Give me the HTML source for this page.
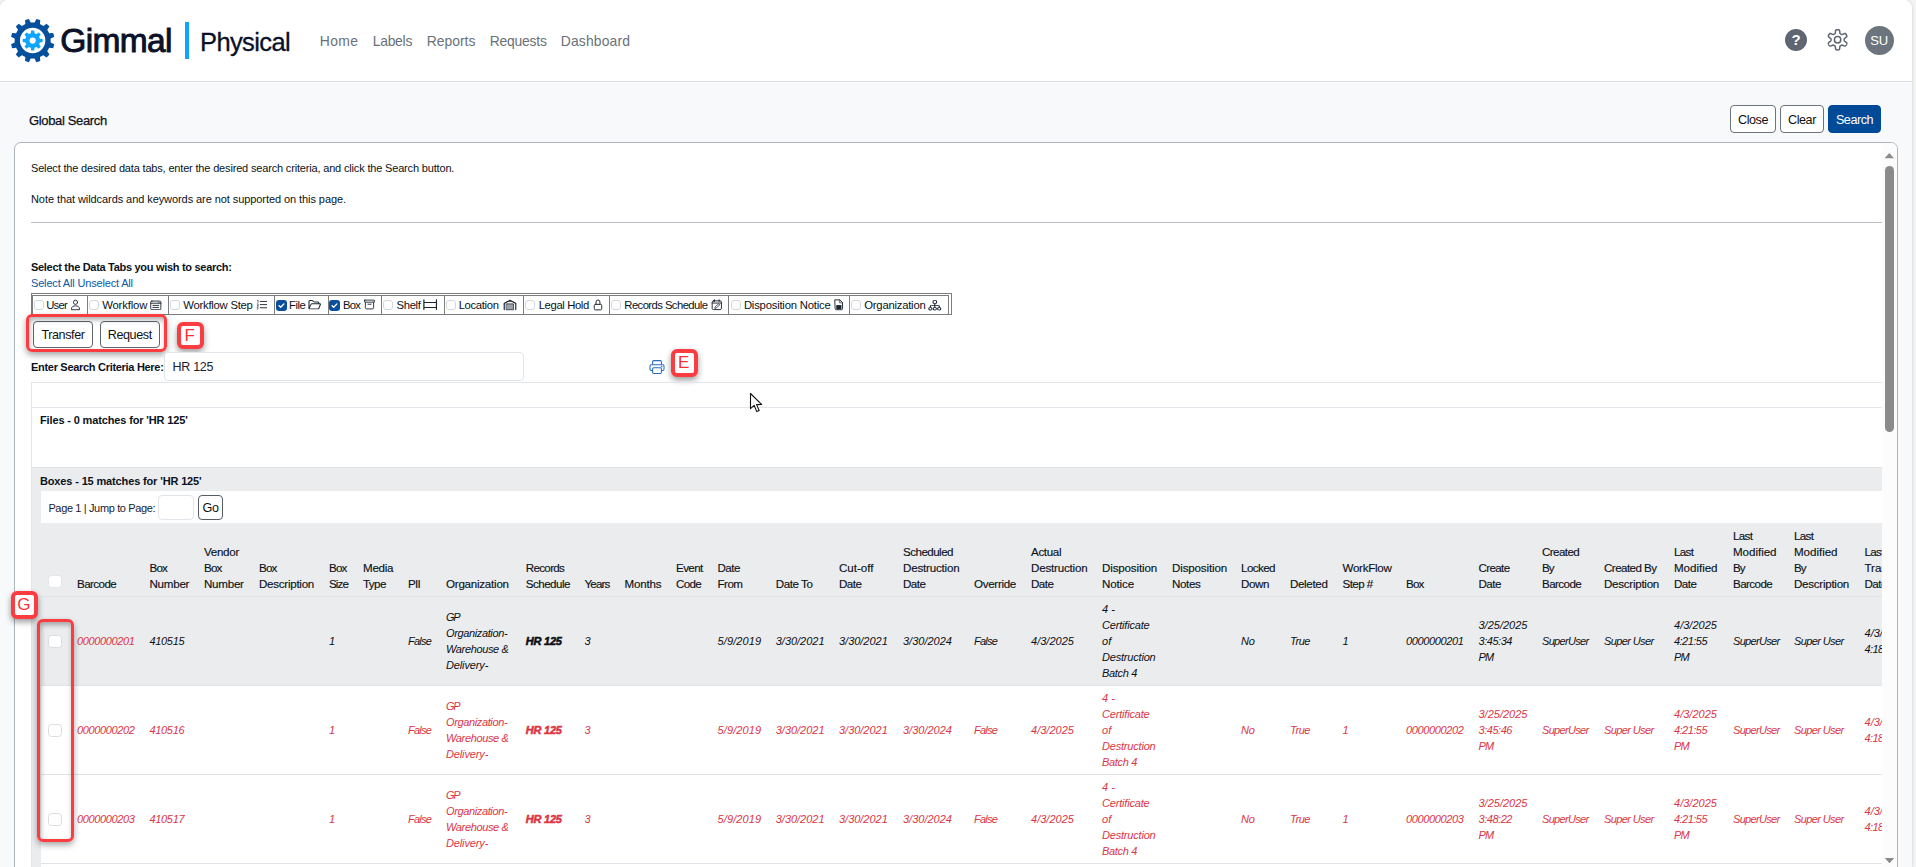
<!DOCTYPE html><html><head><meta charset='utf-8'><title>Global Search</title><style>
html,body{margin:0;padding:0}
body{width:1916px;height:867px;overflow:hidden;background:#f4f4f4;font-family:"Liberation Sans", Arial, sans-serif;font-size:11px;color:#0b1220;position:relative}
.abs,.page *{position:absolute;box-sizing:border-box}
.page{position:absolute;left:0;top:0;width:1912px;height:867px;background:#f8f9fa;border-radius:8px 8px 0 0;overflow:hidden;box-shadow:0 0 3px rgba(0,0,0,.18)}
.hdr{left:0;top:0;width:1912px;height:82px;background:#fff;border-bottom:1px solid #dde1e6}
.t{white-space:nowrap;line-height:16px}
.nav{top:32px;font-size:13.9px;color:#6a7178;line-height:18px;letter-spacing:.1px;white-space:nowrap}
.btn{height:28px;top:105px;border:1px solid #6c757d;border-radius:4px;background:#fff;color:#111;font-size:12.6px;text-align:center;line-height:26px;padding-top:1px;letter-spacing:-.45px;white-space:nowrap}
.panel{left:14px;top:142px;width:1884px;height:740px;background:#fff;border:1px solid #adb4bc;border-radius:7px}
.b{font-weight:bold}
.cb{width:10px;height:10px;border:1px solid #d3d8de;border-radius:3px;background:#fff}
.cbk{width:11px;height:11px;border-radius:3px;background:#0a4f9c}
.tab{top:295px;height:20px;border:1px solid #7d7d7d}
.tt{top:297px;font-size:11.3px;line-height:16px;white-space:nowrap;color:#0b1220;letter-spacing:-.2px}
.red{border:3.5px solid #fb3c40;border-radius:6px;box-shadow:0 3px 6px rgba(0,0,0,.35), inset 1px 3px 5px rgba(0,0,0,.3)}
.badge{width:27px;height:27.6px;border:4px solid #fb3c40;border-radius:6px;background:#fff;color:#fb3036;font-size:17px;line-height:19px;text-align:center;text-indent:-1.5px;box-shadow:0 3px 6px rgba(0,0,0,.4)}
.sbtn{top:320.5px;height:27.5px;width:60px;border:1px solid #5f666d;border-radius:4px;background:#fff;font-size:12.6px;line-height:25px;padding-top:1px;text-align:center;letter-spacing:-.4px;color:#111}
.th{font-size:11.6px;line-height:16px;color:#0b1220;white-space:nowrap;letter-spacing:-.25px;-webkit-text-stroke:.15px #0b1220}
.page span{position:static}
.td{font-size:11px;line-height:16px;font-style:italic;white-space:nowrap;letter-spacing:-.3px}
.td b{position:static;-webkit-text-stroke:.55px}
.r{color:#dc3545}
.k{color:#0b0f14}
.rcb{width:13.6px;height:13.4px;margin-left:-.6px;border:1px solid #d9dde2;border-radius:3.5px;background:#fff}
</style></head><body><div class='page'>
<div class='hdr'></div>
<svg style='left:0;top:0' width='70' height='82' viewBox='0 0 70 82'><path fill='#04509c' fill-rule='evenodd' d='M50.64,42.50 L54.24,44.24 L53.19,48.15 L49.21,47.85 L47.26,51.24 L49.50,54.54 L46.64,57.40 L43.34,55.16 L39.95,57.11 L40.25,61.09 L36.34,62.14 L34.60,58.54 L30.70,58.54 L28.96,62.14 L25.05,61.09 L25.35,57.11 L21.96,55.16 L18.66,57.40 L15.80,54.54 L18.04,51.24 L16.09,47.85 L12.11,48.15 L11.06,44.24 L14.66,42.50 L14.66,38.60 L11.06,36.86 L12.11,32.95 L16.09,33.25 L18.04,29.86 L15.80,26.56 L18.66,23.70 L21.96,25.94 L25.35,23.99 L25.05,20.01 L28.96,18.96 L30.70,22.56 L34.60,22.56 L36.34,18.96 L40.25,20.01 L39.95,23.99 L43.34,25.94 L46.64,23.70 L49.50,26.56 L47.26,29.86 L49.21,33.25 L53.19,32.95 L54.24,36.86 L50.64,38.60Z M19.95,40.55 a12.7,12.7 0 1,0 25.4,0 a12.7,12.7 0 1,0 -25.4,0Z'/><path fill='#10a6ff' fill-rule='evenodd' d='M39.91,38.67 L42.64,39.06 L42.64,42.04 L39.91,42.43 L39.11,44.36 L40.77,46.56 L38.66,48.67 L36.46,47.01 L34.53,47.81 L34.14,50.54 L31.16,50.54 L30.77,47.81 L28.84,47.01 L26.64,48.67 L24.53,46.56 L26.19,44.36 L25.39,42.43 L22.66,42.04 L22.66,39.06 L25.39,38.67 L26.19,36.74 L24.53,34.54 L26.64,32.43 L28.84,34.09 L30.77,33.29 L31.16,30.56 L34.14,30.56 L34.53,33.29 L36.46,34.09 L38.66,32.43 L40.77,34.54 L39.11,36.74Z M29.55,40.55 a3.1,3.1 0 1,0 6.2,0 a3.1,3.1 0 1,0 -6.2,0Z'/></svg>
<div class='t' style='left:60.3px;top:21.3px;font-size:33.5px;line-height:40px;color:#0a1128;letter-spacing:-.65px;-webkit-text-stroke:.95px #0a1128'>Gimmal</div>
<div style='left:185px;top:22px;width:4px;height:37px;background:#0ea5ff'></div>
<div class='t' style='left:200px;top:24px;font-size:25.5px;line-height:36px;color:#0a1128;letter-spacing:-.62px;-webkit-text-stroke:.3px #0a1128'>Physical</div>
<div class='nav' style='left:319.7px;letter-spacing:0.409px'>Home</div>
<div class='nav' style='left:372.7px;letter-spacing:-0.248px'>Labels</div>
<div class='nav' style='left:426.7px;letter-spacing:0.008px'>Reports</div>
<div class='nav' style='left:489.7px;letter-spacing:-0.217px'>Requests</div>
<div class='nav' style='left:560.7px;letter-spacing:0.165px'>Dashboard</div>
<div style='left:1785px;top:29px;width:22px;height:22px;border-radius:50%;background:#5f6672;color:#fff;font-weight:bold;font-size:15px;line-height:22px;text-align:center'>?</div>
<svg style='left:1825px;top:27px' width='26' height='26' viewBox='0 0 26 26'><path d='M19.20,12.80 L19.20,13.03 L19.20,13.26 L19.22,13.50 L19.27,13.74 L19.41,14.00 L19.73,14.32 L20.31,14.72 L21.02,15.21 L21.55,15.71 L21.80,16.15 L21.84,16.53 L21.78,16.89 L21.66,17.22 L21.51,17.54 L21.35,17.85 L21.16,18.15 L20.96,18.44 L20.73,18.70 L20.45,18.93 L20.10,19.09 L19.59,19.10 L18.90,18.88 L18.12,18.51 L17.48,18.22 L17.04,18.10 L16.75,18.11 L16.51,18.18 L16.30,18.29 L16.10,18.40 L15.90,18.52 L15.70,18.63 L15.50,18.75 L15.31,18.88 L15.12,19.05 L14.96,19.30 L14.85,19.73 L14.79,20.44 L14.72,21.30 L14.56,22.01 L14.30,22.44 L13.99,22.67 L13.65,22.79 L13.30,22.86 L12.95,22.89 L12.60,22.90 L12.25,22.89 L11.90,22.86 L11.55,22.79 L11.21,22.67 L10.90,22.44 L10.64,22.01 L10.48,21.30 L10.41,20.44 L10.35,19.73 L10.24,19.30 L10.08,19.05 L9.89,18.88 L9.70,18.75 L9.50,18.63 L9.30,18.52 L9.10,18.40 L8.90,18.29 L8.69,18.18 L8.45,18.11 L8.16,18.10 L7.72,18.22 L7.08,18.51 L6.30,18.88 L5.61,19.10 L5.10,19.09 L4.75,18.93 L4.47,18.70 L4.24,18.44 L4.04,18.15 L3.85,17.85 L3.69,17.54 L3.54,17.22 L3.42,16.89 L3.36,16.53 L3.40,16.15 L3.65,15.71 L4.18,15.21 L4.89,14.72 L5.47,14.32 L5.79,14.00 L5.93,13.74 L5.98,13.50 L6.00,13.26 L6.00,13.03 L6.00,12.80 L6.00,12.57 L6.00,12.34 L5.98,12.10 L5.93,11.86 L5.79,11.60 L5.47,11.28 L4.89,10.88 L4.18,10.39 L3.65,9.89 L3.40,9.45 L3.36,9.07 L3.42,8.71 L3.54,8.38 L3.69,8.06 L3.85,7.75 L4.04,7.45 L4.24,7.16 L4.47,6.90 L4.75,6.67 L5.10,6.51 L5.61,6.50 L6.30,6.72 L7.08,7.09 L7.72,7.38 L8.16,7.50 L8.45,7.49 L8.69,7.42 L8.90,7.31 L9.10,7.20 L9.30,7.08 L9.50,6.97 L9.70,6.85 L9.89,6.72 L10.08,6.55 L10.24,6.30 L10.35,5.87 L10.41,5.16 L10.48,4.30 L10.64,3.59 L10.90,3.16 L11.21,2.93 L11.55,2.81 L11.90,2.74 L12.25,2.71 L12.60,2.70 L12.95,2.71 L13.30,2.74 L13.65,2.81 L13.99,2.93 L14.30,3.16 L14.56,3.59 L14.72,4.30 L14.79,5.16 L14.85,5.87 L14.96,6.30 L15.12,6.55 L15.31,6.72 L15.50,6.85 L15.70,6.97 L15.90,7.08 L16.10,7.20 L16.30,7.31 L16.51,7.42 L16.75,7.49 L17.04,7.50 L17.48,7.38 L18.12,7.09 L18.90,6.72 L19.59,6.50 L20.10,6.51 L20.45,6.67 L20.73,6.90 L20.96,7.16 L21.16,7.45 L21.35,7.75 L21.51,8.06 L21.66,8.38 L21.78,8.71 L21.84,9.07 L21.80,9.45 L21.55,9.89 L21.02,10.39 L20.31,10.88 L19.73,11.28 L19.41,11.60 L19.27,11.86 L19.22,12.10 L19.20,12.34 L19.20,12.57Z' fill='none' stroke='#5f6672' stroke-width='1.5' stroke-linejoin='round'/><circle cx='12.6' cy='12.8' r='3.2' fill='none' stroke='#5f6672' stroke-width='1.5'/></svg>
<div style='left:1864.5px;top:26px;width:29px;height:29px;border-radius:50%;background:#6c757d;color:#fff;font-size:13px;line-height:29px;text-align:center;letter-spacing:-.3px'>SU</div>
<div class='t' style='left:29px;top:111.8px;font-size:13px;line-height:18px;color:#0b1220;letter-spacing:-.35px;-webkit-text-stroke:.25px #0b1220'>Global Search</div>
<div class='btn' style='left:1730px;width:46px'>Close</div>
<div class='btn' style='left:1780px;width:44px'>Clear</div>
<div class='btn' style='left:1828px;width:53px;background:#004a98;border-color:#004a98;color:#fff'>Search</div>
<div class='panel'></div>
<div style='left:1882px;top:143px;width:15px;height:724px;background:#fcfcfc;border-radius:0 6px 0 0'></div>
<svg style='left:1882px;top:150px' width='15' height='12' viewBox='0 0 15 12'><path d='M2.6,8.2 L7.3,3 L12,8.2Z' fill='#8a8a8a'/></svg>
<div style='left:1885px;top:165.5px;width:9px;height:266.5px;border-radius:4.5px;background:#8b8b8b'></div>
<svg style='left:1882px;top:855px' width='15' height='12' viewBox='0 0 15 12'><path d='M2.8,3 L12.2,3 L7.5,8.2Z' fill='#8a8a8a'/></svg>
<div class='t' style='left:31px;top:160px;letter-spacing:-.17px'>Select the desired data tabs, enter the desired search criteria, and click the Search button.</div>
<div class='t' style='left:31px;top:191px;letter-spacing:-.075px'>Note that wildcards and keywords are not supported on this page.</div>
<div style='left:31px;top:222px;width:1851px;height:1px;background:#b9bec4'></div>
<div class='t b' style='left:31px;top:259px;letter-spacing:-.3px'>Select the Data Tabs you wish to search:</div>
<div class='t' style='left:31px;top:275px;color:#0a58a6;letter-spacing:-.17px'>Select All Unselect All</div>
<div style='left:31px;top:293px;width:921px;height:22px;border:1px solid #7d7d7d'></div>
<div class='tab' style='left:32.0px;width:55.8px'></div>
<div class='tab' style='left:86.8px;width:82.2px'></div>
<div class='tab' style='left:168.0px;width:107.0px'></div>
<div class='tab' style='left:274.0px;width:54.8px'></div>
<div class='tab' style='left:327.8px;width:54.2px'></div>
<div class='tab' style='left:381.0px;width:63.8px'></div>
<div class='tab' style='left:443.8px;width:80.2px'></div>
<div class='tab' style='left:523.0px;width:86.8px'></div>
<div class='tab' style='left:608.8px;width:120.0px'></div>
<div class='tab' style='left:727.8px;width:121.9px'></div>
<div class='tab' style='left:848.7px;width:100.1px'></div>
<div class='cb' style='left:33.5px;top:300.3px'></div>
<div class='tt' style='left:46.20px;letter-spacing:-0.727px'>User</div>
<svg style='left:70.3px;top:299.2px' width='11' height='11.4' viewBox='0 0 16 16' preserveAspectRatio='none' fill='none' stroke='#1b2330' stroke-width='1.3' stroke-linecap='round' stroke-linejoin='round'><circle cx='8' cy='4.6' r='3'/><path d='M2,14.5 C2,10.5 5,9.6 8,9.6 S14,10.5 14,14.5Z'/></svg>
<div class='cb' style='left:89.4px;top:300.3px'></div>
<div class='tt' style='left:102.20px;letter-spacing:-0.162px'>Workflow</div>
<svg style='left:150.4px;top:299.6px' width='11.6' height='10.8' viewBox='0 0 16 16' preserveAspectRatio='none' fill='none' stroke='#1b2330' stroke-width='1.3' stroke-linecap='round' stroke-linejoin='round'><rect x='1' y='1.6' width='14' height='12.8' rx='1.6'/><path d='M1,4.8 H15 M4,8 H12 M4,11 H12' /><path d='M12,3.2 h.6' stroke-width='1.4'/></svg>
<div class='cb' style='left:170px;top:300.3px'></div>
<div class='tt' style='left:183.30px;letter-spacing:-0.252px'>Workflow Step</div>
<svg style='left:255.8px;top:299.4px' width='11.4' height='11.2' viewBox='0 0 16 16' preserveAspectRatio='none' fill='none' stroke='#1b2330' stroke-width='1.3' stroke-linecap='round' stroke-linejoin='round'><path d='M6,3.5 H15 M6,8 H15 M6,12.5 H15'/><path d='M2,2 L2.9,1.6 V5 M1.6,7 Q3.6,6.4 3.2,8 L1.6,10 H3.6 M1.6,11.6 Q3.8,11.4 2.6,13 Q4,14.6 1.6,14.6' stroke-width='.9'/></svg>
<div class='cbk' style='left:276px;top:299.8px'></div>
<svg style='left:276px;top:299.8px' width='11' height='11' viewBox='0 0 11 11'><path d='M3.1,5.7 L4.7,7.3 L7.9,3.9' fill='none' stroke='#fff' stroke-width='1.35' stroke-linecap='round' stroke-linejoin='round'/></svg>
<div class='tt' style='left:289.05px;letter-spacing:-0.488px'>File</div>
<svg style='left:308.2px;top:299.4px' width='13' height='11.4' viewBox='0 0 16 16' preserveAspectRatio='none' fill='none' stroke='#1b2330' stroke-width='1.3' stroke-linecap='round' stroke-linejoin='round'><path d='M1.2,12.6 V3.4 Q1.2,2.2 2.4,2.2 H5 Q5.8,2.2 6.6,3.2 Q7.4,4.2 8.4,4.2 H12 Q13.2,4.2 13.2,5.4 V6.6'/><path d='M1.3,13 L3.6,7.6 Q4,6.6 5,6.6 H14.4 Q15.6,6.6 15.2,7.7 L13.5,12.9 Q13.2,13.9 12.2,13.9 H2.4 Q1.2,13.9 1.2,12.6'/></svg>
<div class='cbk' style='left:329px;top:299.8px'></div>
<svg style='left:329px;top:299.8px' width='11' height='11' viewBox='0 0 11 11'><path d='M3.1,5.7 L4.7,7.3 L7.9,3.9' fill='none' stroke='#fff' stroke-width='1.35' stroke-linecap='round' stroke-linejoin='round'/></svg>
<div class='tt' style='left:343.05px;letter-spacing:-0.790px'>Box</div>
<svg style='left:363.6px;top:299.4px' width='11' height='11' viewBox='0 0 16 16' preserveAspectRatio='none' fill='none' stroke='#1b2330' stroke-width='1.3' stroke-linecap='round' stroke-linejoin='round'><rect x='.8' y='1.6' width='14.4' height='3' rx='.5'/><path d='M2,4.8 V12.6 Q2,14.4 3.8,14.4 H12.2 Q14,14.4 14,12.6 V4.8 M5.6,7.6 H10.4'/></svg>
<div class='cb' style='left:383.2px;top:300.3px'></div>
<div class='tt' style='left:396.55px;letter-spacing:-0.360px'>Shelf</div>
<svg style='left:422.6px;top:299.2px' width='14.4' height='11.2' viewBox='0 0 16 16' preserveAspectRatio='none' fill='none' stroke='#1b2330' stroke-width='1.3' stroke-linecap='round' stroke-linejoin='round'><path d='M1,1 V15 M15,1 V15 M1,5 H15 M1,12 H15' stroke-width='1.4'/></svg>
<div class='cb' style='left:446px;top:300.3px'></div>
<div class='tt' style='left:458.70px;letter-spacing:-0.346px'>Location</div>
<svg style='left:503px;top:298.8px' width='14' height='11.8' viewBox='0 0 16 16' preserveAspectRatio='none' fill='none' stroke='#1b2330' stroke-width='1.3' stroke-linecap='round' stroke-linejoin='round'><path d='M1.4,14.5 V6 L8,1.6 L14.6,6 V14.5'/><path d='M1.4,6 Q8,0 14.6,6' stroke-width='1'/><rect x='4' y='6.6' width='8' height='8' fill='#9aa1ab' stroke='#1b2330' stroke-width='.9'/></svg>
<div class='cb' style='left:525.4px;top:300.3px'></div>
<div class='tt' style='left:538.70px;letter-spacing:-0.382px'>Legal Hold</div>
<svg style='left:591.6px;top:299px' width='12' height='11.6' viewBox='0 0 16 16' preserveAspectRatio='none' fill='none' stroke='#1b2330' stroke-width='1.3' stroke-linecap='round' stroke-linejoin='round'><rect x='3' y='7.4' width='10' height='7.6' rx='1.6'/><path d='M5.4,7.4 V4.2 Q5.4,1.4 8,1.4 T10.6,4.2 V7.4'/></svg>
<div class='cb' style='left:611.3px;top:300.3px'></div>
<div class='tt' style='left:624.30px;letter-spacing:-0.576px'>Records Schedule</div>
<svg style='left:710.6px;top:299px' width='11.6' height='11.6' viewBox='0 0 16 16' preserveAspectRatio='none' fill='none' stroke='#1b2330' stroke-width='1.3' stroke-linecap='round' stroke-linejoin='round'><rect x='1.6' y='2.6' width='12.8' height='12' rx='1.8'/><path d='M1.6,5.6 H14.4 M4.8,1 V3.4 M11.2,1 V3.4'/><path d='M5.4,12.6 L6,10.4 L10.8,6.6 L12.2,8 L7.4,12.2Z' stroke-width='1'/></svg>
<div class='cb' style='left:730.7px;top:300.3px'></div>
<div class='tt' style='left:743.90px;letter-spacing:-0.212px'>Disposition Notice</div>
<svg style='left:832.6px;top:299px' width='11.4' height='11.6' viewBox='0 0 16 16' preserveAspectRatio='none' fill='none' stroke='#1b2330' stroke-width='1.3' stroke-linecap='round' stroke-linejoin='round'><path d='M3,1.2 H9.6 L13.4,5 V13.4 Q13.4,14.8 12,14.8 H4.4 Q3,14.8 3,13.4Z'/><path d='M9.4,1.4 V5.2 H13.2' stroke-width='1'/><rect x='4.6' y='8.4' width='7.2' height='5.6' fill='#1b2330' stroke='none'/></svg>
<div class='cb' style='left:851.3px;top:300.3px'></div>
<div class='tt' style='left:864.30px;letter-spacing:-0.239px'>Organization</div>
<svg style='left:928.2px;top:299.6px' width='13.6' height='11' viewBox='0 0 16 16' preserveAspectRatio='none' fill='none' stroke='#1b2330' stroke-width='1.3' stroke-linecap='round' stroke-linejoin='round'><rect x='6' y='.9' width='4' height='4' rx='.8'/><path d='M8,5 V8.2 M2.8,10.4 V8.2 H13.2 V10.4 M8,8.2 V10.4'/><circle cx='2.8' cy='12.6' r='1.9'/><circle cx='8' cy='12.6' r='1.9'/><circle cx='13.2' cy='12.6' r='1.9'/></svg>
<div class='sbtn' style='left:33px'>Transfer</div>
<div class='sbtn' style='left:99.5px;width:60.5px'>Request</div>
<div class='red' style='left:25.9px;top:313.8px;width:141.1px;height:38.2px'></div>
<div class='badge' style='left:177px;top:321.8px'>F</div>
<div class='t b' style='left:31px;top:358.5px;letter-spacing:-.3px'>Enter Search Criteria Here:</div>
<div style='left:164px;top:352px;width:360px;height:29px;border:1px solid #e1e5ea;border-radius:4px;background:#fff'></div>
<div class='t' style='left:172.5px;top:358.8px;font-size:12.5px;letter-spacing:-.3px;color:#1a2230'>HR 125</div>
<svg style='left:648.5px;top:359px' width='16' height='16' viewBox='0 0 16 16' fill='none' stroke='#2a6ac4' stroke-width='1.05' stroke-linejoin='round'><path d='M3.6,5.6 V2.8 Q3.6,1.6 4.8,1.6 H11.2 Q12.4,1.6 12.4,2.8 V5.6'/><path d='M3.4,11.4 H2.2 Q1,11.4 1,10.2 V7 Q1,5.8 2.2,5.8 H13.8 Q15,5.8 15,7 V10.2 Q15,11.4 13.8,11.4 H12.6'/><rect x='3.6' y='8.8' width='8.8' height='5.6' rx='1.1'/><circle cx='12.6' cy='7.6' r='.3'/></svg>
<div class='badge' style='left:671px;top:349.4px'>E</div>
<div style='left:31px;top:382px;width:1851px;height:500px;border-left:1px solid #e4e5e7;border-top:1px solid #e2e5e9'></div>
<div style='left:31px;top:407px;width:1851px;height:1px;background:#e2e5e9'></div>
<div class='t b' style='left:40px;top:412px;letter-spacing:-.14px'>Files - 0 matches for 'HR 125'</div>
<div style='left:31px;top:467px;width:1851px;height:400px;background:#ebecee;border-top:1px solid #e1e2e3;border-left:1px solid #e4e5e7'></div>
<div class='t b' style='left:40px;top:473px;letter-spacing:-.145px'>Boxes - 15 matches for 'HR 125'</div>
<div style='left:41px;top:491px;width:1841px;height:32px;background:#fff'></div>
<div class='t' style='left:48.4px;top:500px;letter-spacing:-.36px;color:#1a2230'>Page 1 | Jump to Page:</div>
<div style='left:158px;top:495px;width:36px;height:25px;border:1px solid #e1e5ea;border-radius:4px;background:#fff'></div>
<div style='left:198px;top:495px;width:25px;height:25px;border:1px solid #555c63;border-radius:4px;background:#fff;font-size:12.6px;line-height:23px;padding-top:1.3px;text-align:center;letter-spacing:-.4px;color:#111'>Go</div>
<div style='left:41px;top:523px;width:1841px;height:344px;overflow:hidden'>
<div style='left:0;top:0;width:1841px;height:73px;background:#ebecee'></div>
<div style='left:0;top:73px;width:1841px;height:1px;background:#dfe2e6'></div>
<div style='left:0;top:74px;width:1841px;height:88px;background:#ebecee'></div>
<div style='left:0;top:162px;width:1841px;height:1px;background:#dfe2e6'></div>
<div style='left:0;top:163px;width:1841px;height:88px;background:#fff'></div>
<div style='left:0;top:251px;width:1841px;height:1px;background:#dfe2e6'></div>
<div style='left:0;top:252px;width:1841px;height:88px;background:#fff'></div>
<div style='left:0;top:340px;width:1841px;height:1px;background:#dfe2e6'></div>
<div style='left:0;top:341px;width:1841px;height:10px;background:#fff'></div>
<div class='rcb' style='left:7.5px;top:52px;border-color:#e3e6ea'></div>
<div class='th' style='left:36px;top:53px'><span style='letter-spacing:-0.562px'>Barcode</span></div>
<div class='th' style='left:108.5px;top:37px'><span style='letter-spacing:-0.828px'>Box</span><br><span style='letter-spacing:-0.250px'>Number</span></div>
<div class='th' style='left:163px;top:21px'><span style='letter-spacing:-0.292px'>Vendor</span><br><span style='letter-spacing:-0.828px'>Box</span><br><span style='letter-spacing:-0.250px'>Number</span></div>
<div class='th' style='left:218px;top:37px'><span style='letter-spacing:-0.828px'>Box</span><br><span style='letter-spacing:-0.273px'>Description</span></div>
<div class='th' style='left:288px;top:37px'><span style='letter-spacing:-0.828px'>Box</span><br><span style='letter-spacing:-0.891px'>Size</span></div>
<div class='th' style='left:322px;top:37px'><span style='letter-spacing:-0.266px'>Media</span><br><span style='letter-spacing:-0.598px'>Type</span></div>
<div class='th' style='left:367px;top:53px'><span style='letter-spacing:-0.729px'>PII</span></div>
<div class='th' style='left:405px;top:53px'><span style='letter-spacing:-0.246px'>Organization</span></div>
<div class='th' style='left:484.75px;top:37px'><span style='letter-spacing:-0.667px'>Records</span><br><span style='letter-spacing:-0.514px'>Schedule</span></div>
<div class='th' style='left:543.5px;top:53px'><span style='letter-spacing:-0.847px'>Years</span></div>
<div class='th' style='left:583.5px;top:53px'><span style='letter-spacing:-0.172px'>Months</span></div>
<div class='th' style='left:635px;top:37px'><span style='letter-spacing:-0.581px'>Event</span><br><span style='letter-spacing:-0.680px'>Code</span></div>
<div class='th' style='left:676.5px;top:37px'><span style='letter-spacing:-0.500px'>Date</span><br><span style='letter-spacing:-0.516px'>From</span></div>
<div class='th' style='left:734.75px;top:53px'><span style='letter-spacing:-0.429px'>Date To</span></div>
<div class='th' style='left:798px;top:37px'><span style='letter-spacing:-0.013px'>Cut-off</span><br><span style='letter-spacing:-0.500px'>Date</span></div>
<div class='th' style='left:862px;top:21px'><span style='letter-spacing:-0.533px'>Scheduled</span><br><span style='letter-spacing:-0.195px'>Destruction</span><br><span style='letter-spacing:-0.500px'>Date</span></div>
<div class='th' style='left:933px;top:53px'><span style='letter-spacing:-0.309px'>Override</span></div>
<div class='th' style='left:990px;top:21px'><span style='letter-spacing:-0.331px'>Actual</span><br><span style='letter-spacing:-0.195px'>Destruction</span><br><span style='letter-spacing:-0.500px'>Date</span></div>
<div class='th' style='left:1061px;top:37px'><span style='letter-spacing:-0.156px'>Disposition</span><br><span style='letter-spacing:-0.146px'>Notice</span></div>
<div class='th' style='left:1131px;top:37px'><span style='letter-spacing:-0.156px'>Disposition</span><br><span style='letter-spacing:-0.359px'>Notes</span></div>
<div class='th' style='left:1200px;top:37px'><span style='letter-spacing:-0.565px'>Locked</span><br><span style='letter-spacing:-0.414px'>Down</span></div>
<div class='th' style='left:1249px;top:53px'><span style='letter-spacing:-0.353px'>Deleted</span></div>
<div class='th' style='left:1301.5px;top:37px'><span style='letter-spacing:-0.291px'>WorkFlow</span><br><span style='letter-spacing:-0.589px'>Step #</span></div>
<div class='th' style='left:1365px;top:53px'><span style='letter-spacing:-0.828px'>Box</span></div>
<div class='th' style='left:1437.5px;top:37px'><span style='letter-spacing:-0.635px'>Create</span><br><span style='letter-spacing:-0.500px'>Date</span></div>
<div class='th' style='left:1501px;top:21px'><span style='letter-spacing:-0.571px'>Created</span><br><span style='letter-spacing:-1.016px'>By</span><br><span style='letter-spacing:-0.562px'>Barcode</span></div>
<div class='th' style='left:1563px;top:37px'><span style='letter-spacing:-0.550px'>Created By</span><br><span style='letter-spacing:-0.273px'>Description</span></div>
<div class='th' style='left:1633px;top:21px'><span style='letter-spacing:-0.668px'>Last</span><br><span style='letter-spacing:-0.041px'>Modified</span><br><span style='letter-spacing:-0.500px'>Date</span></div>
<div class='th' style='left:1692px;top:5px'><span style='letter-spacing:-0.668px'>Last</span><br><span style='letter-spacing:-0.041px'>Modified</span><br><span style='letter-spacing:-1.016px'>By</span><br><span style='letter-spacing:-0.562px'>Barcode</span></div>
<div class='th' style='left:1753px;top:5px'><span style='letter-spacing:-0.668px'>Last</span><br><span style='letter-spacing:-0.041px'>Modified</span><br><span style='letter-spacing:-1.016px'>By</span><br><span style='letter-spacing:-0.273px'>Description</span></div>
<div class='th' style='left:1823.5px;top:21px'><span style='letter-spacing:-0.668px'>Last</span><br><span style='letter-spacing:-0.031px'>Transfer</span><br><span style='letter-spacing:-0.500px'>Date</span></div>
<div class='rcb' style='left:7.5px;top:112px'></div>
<div class='td r' style='left:36px;top:110.0px'><span style='letter-spacing:-0.369px'>0000000201</span></div>
<div class='td k' style='left:108.5px;top:110.0px'><span style='letter-spacing:-0.328px'>410515</span></div>
<div class='td k' style='left:288px;top:110.0px'>1</div>
<div class='td k' style='left:367px;top:110.0px'><span style='letter-spacing:-0.731px'>False</span></div>
<div class='td k' style='left:405px;top:86.0px'><span style='letter-spacing:-1.203px'>GP</span><br><span style='letter-spacing:-0.369px'>Organization-</span><br><span style='letter-spacing:-0.359px'>Warehouse &amp;</span><br><span style='letter-spacing:-0.128px'>Delivery-</span></div>
<div class='td k' style='left:484.75px;top:110.0px'><span style='letter-spacing:-0.216px'><b>HR 125</b></span></div>
<div class='td k' style='left:543.5px;top:110.0px'>3</div>
<div class='td k' style='left:676.5px;top:110.0px'><span style='letter-spacing:0.115px'>5/9/2019</span></div>
<div class='td k' style='left:734.75px;top:110.0px'><span style='letter-spacing:-0.021px'>3/30/2021</span></div>
<div class='td k' style='left:798px;top:110.0px'><span style='letter-spacing:-0.021px'>3/30/2021</span></div>
<div class='td k' style='left:862px;top:110.0px'><span style='letter-spacing:0.007px'>3/30/2024</span></div>
<div class='td k' style='left:933px;top:110.0px'><span style='letter-spacing:-0.731px'>False</span></div>
<div class='td k' style='left:990px;top:110.0px'><span style='letter-spacing:0.009px'>4/3/2025</span></div>
<div class='td k' style='left:1061px;top:78.0px'><span style='letter-spacing:0.052px'>4 -</span><br><span style='letter-spacing:-0.185px'>Certificate</span><br><span style='letter-spacing:0.031px'>of</span><br><span style='letter-spacing:-0.195px'>Destruction</span><br><span style='letter-spacing:-0.330px'>Batch 4</span></div>
<div class='td k' style='left:1200px;top:110.0px'><span style='letter-spacing:-0.156px'>No</span></div>
<div class='td k' style='left:1249px;top:110.0px'><span style='letter-spacing:-0.453px'>True</span></div>
<div class='td k' style='left:1301.5px;top:110.0px'>1</div>
<div class='td k' style='left:1365px;top:110.0px'><span style='letter-spacing:-0.369px'>0000000201</span></div>
<div class='td k' style='left:1437.5px;top:94.0px'><span style='letter-spacing:0.007px'>3/25/2025</span><br><span style='letter-spacing:-0.458px'>3:45:34</span><br><span style='letter-spacing:-0.750px'>PM</span></div>
<div class='td k' style='left:1501px;top:110.0px'><span style='letter-spacing:-0.675px'>SuperUser</span></div>
<div class='td k' style='left:1563px;top:110.0px'><span style='letter-spacing:-0.614px'>Super User</span></div>
<div class='td k' style='left:1633px;top:94.0px'><span style='letter-spacing:0.009px'>4/3/2025</span><br><span style='letter-spacing:-0.529px'>4:21:55</span><br><span style='letter-spacing:-0.750px'>PM</span></div>
<div class='td k' style='left:1692px;top:110.0px'><span style='letter-spacing:-0.675px'>SuperUser</span></div>
<div class='td k' style='left:1753px;top:110.0px'><span style='letter-spacing:-0.614px'>Super User</span></div>
<div class='td k' style='left:1823.5px;top:102.0px'><span style='letter-spacing:0.009px'>4/3/2025</span><br><span style='letter-spacing:-0.627px'>4:18:32 PM</span></div>
<div class='rcb' style='left:7.5px;top:201px'></div>
<div class='td r' style='left:36px;top:199.0px'><span style='letter-spacing:-0.369px'>0000000202</span></div>
<div class='td r' style='left:108.5px;top:199.0px'><span style='letter-spacing:-0.328px'>410516</span></div>
<div class='td r' style='left:288px;top:199.0px'>1</div>
<div class='td r' style='left:367px;top:199.0px'><span style='letter-spacing:-0.731px'>False</span></div>
<div class='td r' style='left:405px;top:175.0px'><span style='letter-spacing:-1.203px'>GP</span><br><span style='letter-spacing:-0.369px'>Organization-</span><br><span style='letter-spacing:-0.359px'>Warehouse &amp;</span><br><span style='letter-spacing:-0.128px'>Delivery-</span></div>
<div class='td r' style='left:484.75px;top:199.0px'><span style='letter-spacing:-0.216px'><b>HR 125</b></span></div>
<div class='td r' style='left:543.5px;top:199.0px'>3</div>
<div class='td r' style='left:676.5px;top:199.0px'><span style='letter-spacing:0.115px'>5/9/2019</span></div>
<div class='td r' style='left:734.75px;top:199.0px'><span style='letter-spacing:-0.021px'>3/30/2021</span></div>
<div class='td r' style='left:798px;top:199.0px'><span style='letter-spacing:-0.021px'>3/30/2021</span></div>
<div class='td r' style='left:862px;top:199.0px'><span style='letter-spacing:0.007px'>3/30/2024</span></div>
<div class='td r' style='left:933px;top:199.0px'><span style='letter-spacing:-0.731px'>False</span></div>
<div class='td r' style='left:990px;top:199.0px'><span style='letter-spacing:0.009px'>4/3/2025</span></div>
<div class='td r' style='left:1061px;top:167.0px'><span style='letter-spacing:0.052px'>4 -</span><br><span style='letter-spacing:-0.185px'>Certificate</span><br><span style='letter-spacing:0.031px'>of</span><br><span style='letter-spacing:-0.195px'>Destruction</span><br><span style='letter-spacing:-0.330px'>Batch 4</span></div>
<div class='td r' style='left:1200px;top:199.0px'><span style='letter-spacing:-0.156px'>No</span></div>
<div class='td r' style='left:1249px;top:199.0px'><span style='letter-spacing:-0.453px'>True</span></div>
<div class='td r' style='left:1301.5px;top:199.0px'>1</div>
<div class='td r' style='left:1365px;top:199.0px'><span style='letter-spacing:-0.369px'>0000000202</span></div>
<div class='td r' style='left:1437.5px;top:183.0px'><span style='letter-spacing:0.007px'>3/25/2025</span><br><span style='letter-spacing:-0.458px'>3:45:46</span><br><span style='letter-spacing:-0.750px'>PM</span></div>
<div class='td r' style='left:1501px;top:199.0px'><span style='letter-spacing:-0.675px'>SuperUser</span></div>
<div class='td r' style='left:1563px;top:199.0px'><span style='letter-spacing:-0.614px'>Super User</span></div>
<div class='td r' style='left:1633px;top:183.0px'><span style='letter-spacing:0.009px'>4/3/2025</span><br><span style='letter-spacing:-0.529px'>4:21:55</span><br><span style='letter-spacing:-0.750px'>PM</span></div>
<div class='td r' style='left:1692px;top:199.0px'><span style='letter-spacing:-0.675px'>SuperUser</span></div>
<div class='td r' style='left:1753px;top:199.0px'><span style='letter-spacing:-0.614px'>Super User</span></div>
<div class='td r' style='left:1823.5px;top:191.0px'><span style='letter-spacing:0.009px'>4/3/2025</span><br><span style='letter-spacing:-0.627px'>4:18:32 PM</span></div>
<div class='rcb' style='left:7.5px;top:290px'></div>
<div class='td r' style='left:36px;top:288.0px'><span style='letter-spacing:-0.369px'>0000000203</span></div>
<div class='td r' style='left:108.5px;top:288.0px'><span style='letter-spacing:-0.328px'>410517</span></div>
<div class='td r' style='left:288px;top:288.0px'>1</div>
<div class='td r' style='left:367px;top:288.0px'><span style='letter-spacing:-0.731px'>False</span></div>
<div class='td r' style='left:405px;top:264.0px'><span style='letter-spacing:-1.203px'>GP</span><br><span style='letter-spacing:-0.369px'>Organization-</span><br><span style='letter-spacing:-0.359px'>Warehouse &amp;</span><br><span style='letter-spacing:-0.128px'>Delivery-</span></div>
<div class='td r' style='left:484.75px;top:288.0px'><span style='letter-spacing:-0.216px'><b>HR 125</b></span></div>
<div class='td r' style='left:543.5px;top:288.0px'>3</div>
<div class='td r' style='left:676.5px;top:288.0px'><span style='letter-spacing:0.115px'>5/9/2019</span></div>
<div class='td r' style='left:734.75px;top:288.0px'><span style='letter-spacing:-0.021px'>3/30/2021</span></div>
<div class='td r' style='left:798px;top:288.0px'><span style='letter-spacing:-0.021px'>3/30/2021</span></div>
<div class='td r' style='left:862px;top:288.0px'><span style='letter-spacing:0.007px'>3/30/2024</span></div>
<div class='td r' style='left:933px;top:288.0px'><span style='letter-spacing:-0.731px'>False</span></div>
<div class='td r' style='left:990px;top:288.0px'><span style='letter-spacing:0.009px'>4/3/2025</span></div>
<div class='td r' style='left:1061px;top:256.0px'><span style='letter-spacing:0.052px'>4 -</span><br><span style='letter-spacing:-0.185px'>Certificate</span><br><span style='letter-spacing:0.031px'>of</span><br><span style='letter-spacing:-0.195px'>Destruction</span><br><span style='letter-spacing:-0.330px'>Batch 4</span></div>
<div class='td r' style='left:1200px;top:288.0px'><span style='letter-spacing:-0.156px'>No</span></div>
<div class='td r' style='left:1249px;top:288.0px'><span style='letter-spacing:-0.453px'>True</span></div>
<div class='td r' style='left:1301.5px;top:288.0px'>1</div>
<div class='td r' style='left:1365px;top:288.0px'><span style='letter-spacing:-0.369px'>0000000203</span></div>
<div class='td r' style='left:1437.5px;top:272.0px'><span style='letter-spacing:0.007px'>3/25/2025</span><br><span style='letter-spacing:-0.458px'>3:48:22</span><br><span style='letter-spacing:-0.750px'>PM</span></div>
<div class='td r' style='left:1501px;top:288.0px'><span style='letter-spacing:-0.675px'>SuperUser</span></div>
<div class='td r' style='left:1563px;top:288.0px'><span style='letter-spacing:-0.614px'>Super User</span></div>
<div class='td r' style='left:1633px;top:272.0px'><span style='letter-spacing:0.009px'>4/3/2025</span><br><span style='letter-spacing:-0.529px'>4:21:55</span><br><span style='letter-spacing:-0.750px'>PM</span></div>
<div class='td r' style='left:1692px;top:288.0px'><span style='letter-spacing:-0.675px'>SuperUser</span></div>
<div class='td r' style='left:1753px;top:288.0px'><span style='letter-spacing:-0.614px'>Super User</span></div>
<div class='td r' style='left:1823.5px;top:280.0px'><span style='letter-spacing:0.009px'>4/3/2025</span><br><span style='letter-spacing:-0.627px'>4:18:32 PM</span></div>
</div>
<div class='red' style='left:37px;top:618.8px;width:37px;height:223.2px'></div>
<div class='badge' style='left:11px;top:591px'>G</div>
<svg style='left:749px;top:392px' width='16' height='22' viewBox='0 0 16 22'><path d='M1.5,1.5 V16.6 L5.2,13.4 L7.8,19.6 L10.2,18.6 L7.6,12.6 L12.6,12.4Z' fill='#fff' stroke='#111' stroke-width='1.1' stroke-linejoin='round'/></svg>
</div></body></html>
